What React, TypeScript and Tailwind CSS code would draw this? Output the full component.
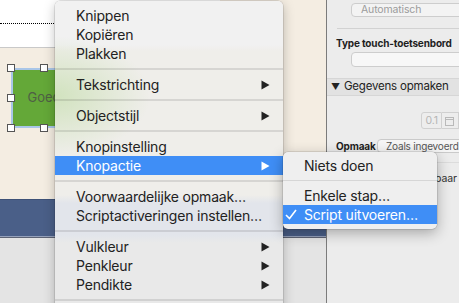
import React from 'react';

/**
 * A layout editor caught mid-right-click: the canvas with a selected button,
 * the inspector on the right, and the context menu with its "Knopactie"
 * submenu open on top of both.
 */

type Row = { label: string; sub?: boolean; active?: boolean; check?: boolean } | 'sep';

const MAIN_MENU: Row[] = [
  { label: 'Knippen' },
  { label: 'Kopiëren' },
  { label: 'Plakken' },
  'sep',
  { label: 'Tekstrichting', sub: true },
  'sep',
  { label: 'Objectstijl', sub: true },
  'sep',
  { label: 'Knopinstelling' },
  { label: 'Knopactie', sub: true, active: true },
  'sep',
  { label: 'Voorwaardelijke opmaak…' },
  { label: 'Scriptactiveringen instellen…' },
  'sep',
  { label: 'Vulkleur', sub: true },
  { label: 'Penkleur', sub: true },
  { label: 'Pendikte', sub: true },
  'sep',
];

const SUB_MENU: Row[] = [
  { label: 'Niets doen' },
  'sep',
  { label: 'Enkele stap…' },
  { label: 'Script uitvoeren…', active: true, check: true },
];

function Arrow() {
  return (
    <svg width="9" height="10" viewBox="0 0 9 10" aria-hidden>
      <path d="M0.5 0.5 L8.5 5 L0.5 9.5 Z" fill="currentColor" />
    </svg>
  );
}

function Check() {
  return (
    <svg width="12" height="11" viewBox="0 0 12 11" aria-hidden className="absolute left-[2px] top-[4px]">
      <path d="M1 6 L4.5 9.5 L11 1" fill="none" stroke="currentColor" strokeWidth="1.6" />
    </svg>
  );
}

function MenuRows({ rows, sepClass }: { rows: Row[]; sepClass: string }) {
  return (
    <>
      {rows.map((row, i) =>
        row === 'sep' ? (
          <div key={i} className={sepClass} />
        ) : (
          <div
            key={i}
            className={
              row.active
                ? 'relative flex h-[19px] items-center justify-between bg-[#3f8ef6] pl-[21px] pr-[13px] text-white'
                : 'relative flex h-[19px] items-center justify-between pl-[21px] pr-[13px] text-[#222]'
            }
          >
            {row.check && <Check />}
            <span className="whitespace-nowrap">{row.label}</span>
            {row.sub && <Arrow />}
          </div>
        ),
      )}
    </>
  );
}

function Handle({ className }: { className: string }) {
  return <div className={`absolute h-[8px] w-[8px] border border-[#555] bg-white ${className}`} />;
}

function Canvas() {
  return (
    <div className="flex w-[327px] flex-col border-r border-[#7b7b7b] bg-[#f4ede2]">
      <div className="flex h-[48px]">
        <div className="w-[220px] border-b border-[#c9c9c9] bg-white pt-[23px]">
          <div className="w-[120px] border-t border-dotted border-black" />
        </div>
      </div>
      <div className="relative h-[151px]">
        {/* the selected button, at its spot on the layout */}
        <div className="absolute left-[11px] top-[20px] flex h-[60px] w-[66px] items-center justify-center rounded-[3px] border-2 border-[#a9c6e8] bg-[#64a838] text-[13px] text-[#4f5f45]">
          Goed
        </div>
        <Handle className="left-[7px] top-[16px]" />
        <Handle className="left-[40px] top-[16px]" />
        <Handle className="left-[7px] top-[46px]" />
        <Handle className="left-[7px] top-[76px]" />
        <Handle className="left-[40px] top-[76px]" />
      </div>
      <div className="h-[37px] border-t border-[#3d5177] bg-[#4a5f88]" />
      <div className="h-px bg-[#95a1bb]" />
      <div className="h-px bg-[#5d6374]" />
      <div className="flex-1 bg-[#e4e4e4]" />
    </div>
  );
}

function Inspector() {
  return (
    <div className="flex min-w-0 flex-1 flex-col overflow-hidden bg-[#ececec] text-[10.5px] tracking-[-0.15px] text-[#1e1e1e]">
      <div className="ml-[24px] mt-[3px] flex h-[14px] w-[140px] shrink-0 items-center rounded-[4px] border border-[#cdcdcd] bg-[#f3f3f3] pl-[9px] text-[#9b9b9b]">
        Automatisch
      </div>
      <div className="ml-[10px] mt-[11px] h-px shrink-0 bg-[#d2d2d2]" />
      <div className="ml-[9px] mt-[7px] h-[14px] shrink-0 whitespace-nowrap text-[10px] font-bold leading-[14px]">
        Type touch-toetsenbord
      </div>
      <div className="ml-[24px] mt-[2px] h-[15px] w-[140px] shrink-0 rounded-[4px] border border-[#cdcdcd] bg-[#f7f7f7]" />
      <div className="mt-[11px] flex h-[18px] shrink-0 items-center gap-[4px] border-y border-[#d6d6d6] bg-[#e2e2e2] pl-[4px] text-[11.5px] tracking-[-0.2px] text-[#222]">
        <span className="text-[9px]">▼</span>
        <span className="whitespace-nowrap">Gegevens opmaken</span>
      </div>
      <div className="ml-[94px] mt-[16px] flex h-[17px] shrink-0">
        <div className="flex w-[26px] items-center justify-center rounded-l-[3px] border border-[#d0d0d0] bg-[#ededed] text-[#b5b5b5]">
          0.1
        </div>
        <div className="flex w-[20px] items-center border-y border-r border-[#d0d0d0] bg-[#ededed] pl-[3px]">
          <svg width="9" height="10" viewBox="0 0 9 10" aria-hidden>
            <rect x="0.5" y="1.5" width="8" height="8" fill="none" stroke="#b9b9b9" />
            <path d="M0.5 3.5 H8.5" stroke="#b9b9b9" />
          </svg>
        </div>
      </div>
      <div className="mt-[10px] flex h-[14px] shrink-0 items-center">
        <span className="w-[50px] shrink-0 pl-[9px] text-[10px] font-bold">Opmaak</span>
        <div className="flex h-[14px] w-[120px] shrink-0 items-center whitespace-nowrap rounded-[4px] border border-[#cacaca] bg-[#f5f5f5] pl-[8px] text-[10px] tracking-[-0.2px] text-[#555]">
          Zoals ingevoerd
        </div>
      </div>
      <div className="mt-[9px] h-px shrink-0 bg-[#dcdcdc]" />
      <div className="mt-[9px] flex h-[14px] shrink-0 items-center whitespace-nowrap pl-[84px] text-[#333]">
        Zichtbaar
      </div>
    </div>
  );
}

export default function App() {
  return (
    <div className="relative flex h-[303px] w-[459px] overflow-hidden font-['Inter','Noto_Sans',sans-serif]">
      <Canvas />
      <Inspector />

      <div className="absolute left-[55px] top-[1px] h-[330px] w-[228px] rounded-[5px] bg-[image:radial-gradient(ellipse_95px_60px_at_0px_95px,rgba(140,200,90,0.3),transparent),linear-gradient(to_bottom,#f1f1f1_0px,#f1f1f1_44px,#efeeea_50px,#efeeea_194px,#e2e5eb_202px,#e2e5eb_234px,#e9e9e9_242px)] pt-[5px] text-[14px] tracking-[-0.2px] shadow-[0_3px_12px_rgba(0,0,0,0.25),0_0_0_0.5px_rgba(0,0,0,0.18)]">
        <MenuRows rows={MAIN_MENU} sepClass="my-[5px] h-[2px] bg-black/10" />
      </div>

      <div className="absolute left-[283px] top-[152px] w-[154px] rounded-[5px] bg-[#efefef] pb-[5px] pt-[4px] text-[14px] tracking-[-0.2px] shadow-[0_4px_14px_rgba(0,0,0,0.3),0_0_0_0.5px_rgba(0,0,0,0.18)]">
        <MenuRows rows={SUB_MENU} sepClass="my-[5px] h-px bg-black/10" />
      </div>
    </div>
  );
}
